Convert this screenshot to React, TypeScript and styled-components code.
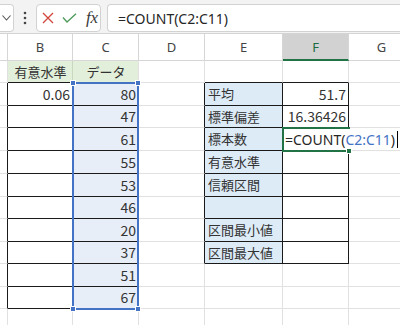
import React from "react";
import styled, { createGlobalStyle } from "styled-components";

const GlobalStyle = createGlobalStyle`
  html, body { margin: 0; padding: 0; background: #ffffff; }
  body { font-family: "Noto Sans", "Noto Sans CJK JP", sans-serif; }
  * { box-sizing: border-box; }
`;

const Page = styled.div`
  width: 400px;
  height: 325px;
  overflow: hidden;
  background: #ffffff;
`;

const FormulaBar = styled.div`
  display: flex;
  align-items: flex-start;
  height: 34px;
  padding-top: 4px;
  background: #f3f3f3;
  border-bottom: 1px solid #d4d4d4;
`;

const NameTail = styled.div`
  width: 14px;
  height: 28px;
  background: #ffffff;
  border: 1px solid #d2d2d2;
  border-left: none;
  border-radius: 0 4px 4px 0;
  display: flex;
  align-items: center;
  justify-content: center;
`;

const DotsBox = styled.div`
  width: 22px;
  height: 28px;
  display: flex;
  align-items: center;
  justify-content: center;
`;

const IconGroup = styled.div`
  width: 65px;
  height: 28px;
  background: #ffffff;
  border: 1px solid #d2d2d2;
  border-radius: 4px;
  display: flex;
  align-items: center;
  padding-left: 5px;
  gap: 8px;
`;

const Fx = styled.span`
  font-family: "Liberation Serif", serif;
  font-style: italic;
  font-weight: normal;
  font-size: 17px;
  color: #3a3a3a;
  letter-spacing: -0.3px;
  margin-left: 1px;
`;

const FormulaInput = styled.div`
  flex: 1;
  margin-left: 6px;
  height: 28px;
  background: #ffffff;
  border: 1px solid #d2d2d2;
  border-right: none;
  border-radius: 4px 0 0 4px;
  display: flex;
  align-items: center;
  padding-left: 10px;
  font-family: "Noto Sans", sans-serif;
  font-size: 14px;
  color: #262626;
  white-space: nowrap;
`;

const SheetWrap = styled.div`
  position: relative;
`;

const Grid = styled.div<{ $cols: string; $rows: string }>`
  display: grid;
  grid-template-columns: ${(p) => p.$cols};
  grid-template-rows: ${(p) => p.$rows};
`;

const HeaderCell = styled.div<{ $active?: boolean }>`
  display: flex;
  align-items: center;
  justify-content: center;
  font-family: "Noto Sans", sans-serif;
  font-size: 13px;
  color: ${(p) => (p.$active ? "#1d6b40" : "#444444")};
  background: ${(p) => (p.$active ? "#d2d2d2" : "#ffffff")};
  border-right: 1px solid #d6d6d6;
  border-bottom: ${(p) => (p.$active ? "2px solid #217346" : "1px solid #d6d6d6")};
  overflow: hidden;
  white-space: nowrap;
`;

const Cell = styled.div<{
  $bg: string;
  $align: string;
  $right: string;
  $bottom: string;
  $jp?: boolean;
}>`
  display: flex;
  align-items: center;
  justify-content: ${(p) => p.$align};
  padding: 0 2px 1px 3px;
  background: ${(p) => p.$bg};
  border-right: 1px solid ${(p) => p.$right};
  border-bottom: 1px solid ${(p) => p.$bottom};
  font-family: "Noto Sans CJK JP", sans-serif;
  font-size: ${(p) => (p.$jp ? "13px" : "14px")};
  line-height: 1;
  color: #333333;
  white-space: nowrap;
  overflow: hidden;
`;

const SelectionBox = styled.div`
  position: absolute;
  left: 72px;
  top: 48px;
  width: 67px;
  height: 228px;
  border: 2px solid #4472c4;
  pointer-events: none;
`;

const Handle = styled.div<{ $x: "left" | "right"; $y: "top" | "bottom"; $color: string }>`
  position: absolute;
  width: 6px;
  height: 6px;
  background: ${(p) => p.$color};
  border: 1px solid #ffffff;
  ${(p) => p.$x}: -4px;
  ${(p) => p.$y}: -4px;
`;

const EditorBox = styled.div`
  position: absolute;
  left: 282px;
  top: 93px;
  width: 68px;
  height: 25px;
  border: 2px solid #217346;
`;

const EditorText = styled.div`
  position: absolute;
  left: 0px;
  top: 0px;
  height: 21px;
  display: flex;
  align-items: center;
  padding-left: 1px;
  padding-right: 4px;
  background: #ffffff;
  font-family: "Noto Sans", sans-serif;
  font-size: 14px;
  color: #262626;
  white-space: nowrap;
`;

const RefText = styled.span`
  color: #4472c4;
`;

const Caret = styled.span`
  display: inline-block;
  width: 1px;
  height: 17px;
  background: #000000;
  margin-left: 2px;
`;

const colWidths = [8, 65, 66, 66, 78, 66, 66];
const colNames = ["", "B", "C", "D", "E", "F", "G"];
const rowHeights = [22, 23, 22, 23, 23, 23, 22, 23, 22, 23, 22, 23];

const dataC = ["80", "47", "61", "55", "53", "46", "20", "37", "51", "67"];
const labelsE = ["平均", "標準偏差", "標本数", "有意水準", "信頼区間", "", "区間最小値", "区間最大値"];

const GRID = "#e1e1e1";
const BLACK = "#1a1a1a";

// r: 1-based row, c: 0..6 (A..G)
function bordered(r: number, c: number): boolean {
  if ((c === 1 || c === 2) && r >= 2 && r <= 11) return true;
  if ((c === 4 || c === 5) && r >= 2 && r <= 9) return true;
  return false;
}

type CellInfo = { text: string; bg: string; align: string; jp?: boolean };

function cellInfo(r: number, c: number): CellInfo {
  const base: CellInfo = { text: "", bg: "#ffffff", align: "flex-end" };
  if (r === 1 && c === 1) return { text: "有意水準", bg: "#e2efda", align: "center", jp: true };
  if (r === 1 && c === 2) return { text: "データ", bg: "#e2efda", align: "center", jp: true };
  if (r === 2 && c === 1) return { ...base, text: "0.06" };
  if (c === 2 && r >= 2 && r <= 11) return { text: dataC[r - 2], bg: "#e8eef8", align: "flex-end" };
  if (c === 4 && r >= 2 && r <= 9)
    return { text: labelsE[r - 2], bg: "#ddebf7", align: "flex-start", jp: true };
  if (c === 5 && r === 2) return { ...base, text: "51.7" };
  if (c === 5 && r === 3) return { ...base, text: "16.36426" };
  return base;
}

const XIcon = () => (
  <svg width="12" height="12" viewBox="0 0 12 12">
    <path d="M1 1 L11 11 M11 1 L1 11" stroke="#d0463b" strokeWidth="1.3" fill="none" />
  </svg>
);

const CheckIcon = () => (
  <svg width="15" height="10" viewBox="0 0 15 10">
    <path d="M1 4.5 L5 9 L14 0.8" stroke="#4c9a5c" strokeWidth="1.3" fill="none" />
  </svg>
);

const Chevron = () => (
  <svg width="9" height="6" viewBox="0 0 9 6">
    <path d="M0.5 0.5 L4.5 5 L8.5 0.5" stroke="#555555" strokeWidth="1.1" fill="none" />
  </svg>
);

const Dots = () => (
  <svg width="4" height="14" viewBox="0 0 4 14">
    <circle cx="2" cy="2" r="1.3" fill="#444444" />
    <circle cx="2" cy="7" r="1.3" fill="#444444" />
    <circle cx="2" cy="12" r="1.3" fill="#444444" />
  </svg>
);

export default function App() {
  const cols = colWidths.map((w) => `${w}px`).join(" ");
  const rows = ["27px", ...rowHeights.map((h) => `${h}px`)].join(" ");

  const cells: React.ReactNode[] = [];
  colNames.forEach((n, c) => {
    cells.push(
      <HeaderCell key={`h${c}`} $active={n === "F"}>
        {n}
      </HeaderCell>
    );
  });
  rowHeights.forEach((_, i) => {
    const r = i + 1;
    colNames.forEach((_, c) => {
      const info = cellInfo(r, c);
      const right = bordered(r, c) || bordered(r, c + 1) ? BLACK : r === 1 && c === 1 ? "#c9d6c0" : GRID;
      const bottom = bordered(r, c) || bordered(r + 1, c) ? BLACK : GRID;
      cells.push(
        <Cell
          key={`${r}-${c}`}
          $bg={info.bg}
          $align={info.align}
          $right={right}
          $bottom={bottom}
          $jp={info.jp}
        >
          {info.text}
        </Cell>
      );
    });
  });

  return (
    <Page>
      <GlobalStyle />
      <FormulaBar>
        <NameTail>
          <Chevron />
        </NameTail>
        <DotsBox>
          <Dots />
        </DotsBox>
        <IconGroup>
          <XIcon />
          <CheckIcon />
          <Fx>fx</Fx>
        </IconGroup>
        <FormulaInput>=COUNT(C2:C11)</FormulaInput>
      </FormulaBar>
      <SheetWrap>
        <Grid $cols={cols} $rows={rows}>
          {cells}
        </Grid>
        <SelectionBox>
          <Handle $x="left" $y="top" $color="#4472c4" />
          <Handle $x="right" $y="top" $color="#4472c4" />
          <Handle $x="left" $y="bottom" $color="#4472c4" />
          <Handle $x="right" $y="bottom" $color="#4472c4" />
        </SelectionBox>
        <EditorBox>
          <EditorText>
            =COUNT(<RefText>C2:C11</RefText>)<Caret />
          </EditorText>
          <Handle $x="right" $y="bottom" $color="#217346" />
        </EditorBox>
      </SheetWrap>
    </Page>
  );
}
